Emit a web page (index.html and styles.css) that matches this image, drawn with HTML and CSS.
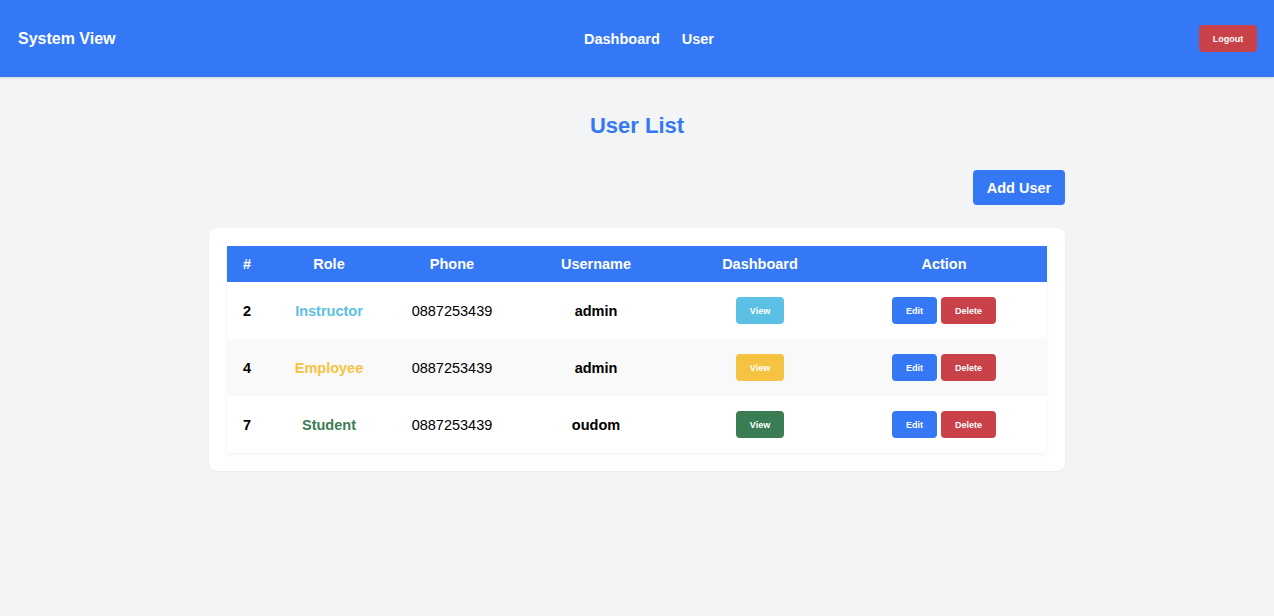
FILE: index.html
```html
<!DOCTYPE html>
<html>
<head>
<meta charset="utf-8">
<link rel="stylesheet" href="styles.css">
</head>
<body>
<header class="topbar">
  <div class="brand">System View</div>
  <nav class="nav">
    <a href="#">Dashboard</a>
    <a href="#">User</a>
  </nav>
  <div class="right"><button class="btn btn-logout">Logout</button></div>
</header>
<main class="main">
  <h1 class="title">User List</h1>
  <div class="toolbar">
    <button class="btn-add">Add User</button>
  </div>
  <div class="card">
    <table class="users">
      <colgroup>
        <col class="c1"><col class="c2"><col class="c3"><col class="c4"><col class="c5"><col class="c6">
      </colgroup>
      <thead>
        <tr><th>#</th><th>Role</th><th>Phone</th><th>Username</th><th>Dashboard</th><th>Action</th></tr>
      </thead>
      <tbody>
        <tr>
          <td class="b">2</td>
          <td class="b role-info">Instructor</td>
          <td>0887253439</td>
          <td class="b">admin</td>
          <td><button class="btn btn-view info">View</button></td>
          <td><button class="btn btn-edit">Edit</button><button class="btn btn-del">Delete</button></td>
        </tr>
        <tr class="alt">
          <td class="b">4</td>
          <td class="b role-warn">Employee</td>
          <td>0887253439</td>
          <td class="b">admin</td>
          <td><button class="btn btn-view warn">View</button></td>
          <td><button class="btn btn-edit">Edit</button><button class="btn btn-del">Delete</button></td>
        </tr>
        <tr>
          <td class="b">7</td>
          <td class="b role-success">Student</td>
          <td>0887253439</td>
          <td class="b">oudom</td>
          <td><button class="btn btn-view success">View</button></td>
          <td><button class="btn btn-edit">Edit</button><button class="btn btn-del">Delete</button></td>
        </tr>
      </tbody>
    </table>
  </div>
</main>
</body>
</html>
```
FILE: styles.css
```css
* { box-sizing: border-box; }
html, body { margin: 0; padding: 0; }
body {
  font-family: "Liberation Sans", Arial, Helvetica, sans-serif;
  background: #f3f4f6;
  color: #000;
  width: 1274px;
  min-height: 616px;
}
.topbar {
  height: 77px;
  background: #3578f6;
  display: grid;
  grid-template-columns: 1fr auto 1fr;
  align-items: center;
  padding: 0 17px 0 18px;
  box-shadow: 0 1px 2px rgba(0,0,0,0.12);
}
.brand {
  color: #fff;
  font-weight: bold;
  font-size: 16px;
}
.nav {
  display: flex;
  gap: 22px;
  margin-left: 23px;
}
.nav a {
  color: #fff;
  text-decoration: none;
  font-weight: bold;
  font-size: 14.5px;
}
.right {
  display: flex;
  justify-content: flex-end;
}
.btn {
  border: none;
  color: #fff;
  font-family: inherit;
  font-weight: bold;
  font-size: 9px;
  border-radius: 4px;
  padding: 0;
  cursor: pointer;
}
.btn-logout {
  background: #c9424a;
  width: 58px;
  height: 27px;
}
.main {
  width: 856px;
  margin: 0 auto;
  padding-top: 36px;
}
.title {
  margin: 0 0 31px;
  text-align: center;
  font-size: 22px;
  line-height: 26px;
  color: #3578f6;
  font-weight: bold;
}
.toolbar {
  display: flex;
  justify-content: flex-end;
}
.btn-add {
  background: #3578f6;
  color: #fff;
  border: none;
  border-radius: 4px;
  width: 92px;
  height: 35px;
  font-family: inherit;
  font-weight: bold;
  font-size: 14.5px;
  padding: 0;
}
.card {
  margin-top: 23px;
  background: #fff;
  border-radius: 8px;
  padding: 18px;
  box-shadow: 0 1px 3px rgba(0,0,0,0.04);
}
.users {
  width: 820px;
  border-collapse: collapse;
  table-layout: fixed;
  box-shadow: 0 1px 4px rgba(0,0,0,0.06);
}
.c1 { width: 40px; }
.c2 { width: 124px; }
.c3 { width: 122px; }
.c4 { width: 166px; }
.c5 { width: 162px; }
.c6 { width: 206px; }
.users th {
  background: #3578f6;
  color: #fff;
  font-weight: bold;
  font-size: 14.5px;
  height: 36px;
  padding: 0;
  text-align: center;
}
.users td {
  height: 57px;
  padding: 0;
  text-align: center;
  font-size: 14.5px;
  background: #fff;
}
.users tr.alt td { background: #f9f9f9; }
.users td.b { font-weight: bold; }
.role-info { color: #5bc0e3; }
.role-warn { color: #f5c242; }
.role-success { color: #3a7d55; }
.btn-view {
  width: 48px;
  height: 27px;
  vertical-align: middle;
}
.info { background: #5bc0e3; }
.warn { background: #f5c242; }
.success { background: #3a7d55; }
.btn-edit {
  background: #3578f6;
  width: 45px;
  height: 27px;
  vertical-align: middle;
}
.btn-del {
  background: #c9424a;
  width: 55px;
  height: 27px;
  vertical-align: middle;
  margin-left: 4px;
}
```
